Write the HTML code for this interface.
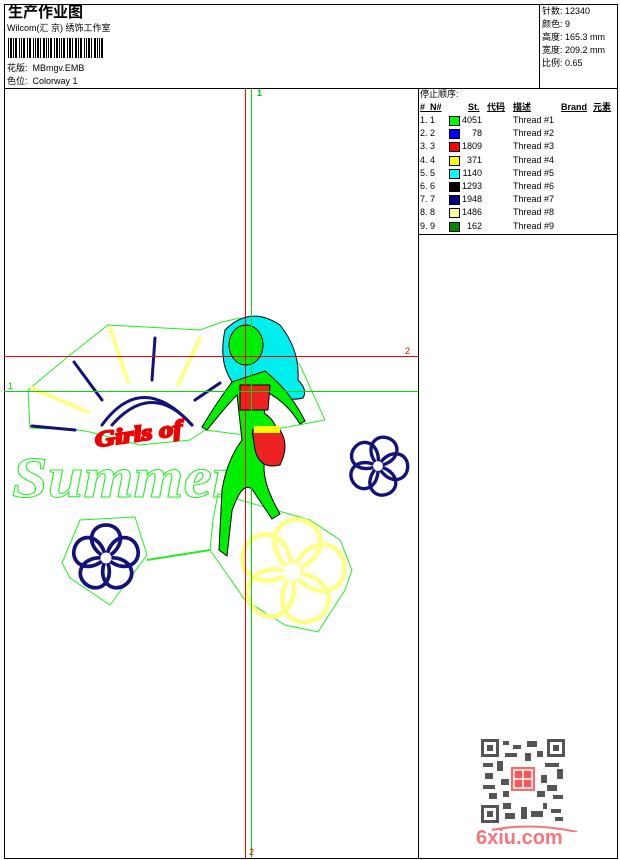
<!DOCTYPE html>
<html><head><meta charset="utf-8"><style>
body{margin:0;width:620px;height:860px;background:#fff;position:relative;overflow:hidden;font-family:"Liberation Sans","Noto Sans CJK SC",sans-serif;color:#000}
.a{position:absolute}
.t{font-size:9px;line-height:11px;white-space:nowrap}
</style></head><body>
<svg class="a" style="left:0;top:0" width="620" height="860">
<defs>
<g id="pet"><path d="M-3,-2 C-14,-10 -10,-22 0,-22 C10,-22 14,-10 3,-2"/></g>
</defs>
<g stroke="#000" stroke-width="1" fill="none" shape-rendering="crispEdges">
<rect x="4.5" y="4.5" width="613" height="854"/>
<line x1="4" y1="88.5" x2="618" y2="88.5"/>
<line x1="539.5" y1="4" x2="539.5" y2="88"/>
<line x1="418.5" y1="88" x2="418.5" y2="858"/>
<line x1="418" y1="234.5" x2="618" y2="234.5"/>
</g>
<g fill="#000" shape-rendering="crispEdges">
<rect x="8" y="38" width="1" height="20"/><rect x="10" y="38" width="2" height="20"/><rect x="13" y="38" width="1" height="20"/><rect x="15" y="38" width="2" height="20"/><rect x="19" y="38" width="1" height="20"/><rect x="21" y="38" width="1" height="20"/><rect x="23" y="38" width="2" height="20"/><rect x="27" y="38" width="1" height="20"/><rect x="29" y="38" width="2" height="20"/><rect x="33" y="38" width="1" height="20"/><rect x="35" y="38" width="1" height="20"/><rect x="37" y="38" width="2" height="20"/><rect x="40" y="38" width="1" height="20"/><rect x="43" y="38" width="2" height="20"/><rect x="46" y="38" width="1" height="20"/><rect x="48" y="38" width="1" height="20"/><rect x="50" y="38" width="2" height="20"/><rect x="54" y="38" width="1" height="20"/><rect x="56" y="38" width="2" height="20"/><rect x="59" y="38" width="1" height="20"/><rect x="61" y="38" width="1" height="20"/><rect x="63" y="38" width="2" height="20"/><rect x="67" y="38" width="1" height="20"/><rect x="69" y="38" width="2" height="20"/><rect x="72" y="38" width="1" height="20"/><rect x="75" y="38" width="2" height="20"/><rect x="78" y="38" width="1" height="20"/><rect x="80" y="38" width="2" height="20"/><rect x="84" y="38" width="1" height="20"/><rect x="86" y="38" width="1" height="20"/><rect x="88" y="38" width="2" height="20"/><rect x="91" y="38" width="1" height="20"/><rect x="94" y="38" width="2" height="20"/><rect x="97" y="38" width="1" height="20"/><rect x="99" y="38" width="1" height="20"/><rect x="101" y="38" width="2" height="20"/>
</g>
<g fill="none" stroke="#2e2" stroke-width="1">
<polygon points="108,325 200,330 222,322 240,318 300,365 325,420 245,435 205,430 190,440 140,445 90,432 78,430 30,428 28,390 70,355"/>
<polygon points="80,520 135,517 147,555 110,605 70,578 62,563"/>
<line x1="147" y1="560" x2="210" y2="550" stroke-width="2"/>
<polygon points="218,494 240,500 275,510 310,520 340,540 352,570 345,590 318,632 285,625 245,600 210,550 213,520"/>
</g>
<text x="12" y="497" font-family="Liberation Serif" font-style="italic" font-weight="bold" font-size="58" fill="none" stroke="#2e2" stroke-width="1" textLength="225" lengthAdjust="spacingAndGlyphs">Summer</text>
<g stroke="#ff8" stroke-width="4" stroke-linecap="round">
<line x1="110" y1="328" x2="128" y2="382"/><line x1="200" y1="338" x2="178" y2="385"/><line x1="32" y1="388" x2="88" y2="412"/>
</g>
<g stroke="#12127a" stroke-width="3" stroke-linecap="round" fill="none">
<line x1="74" y1="362" x2="102" y2="400"/><line x1="155" y1="338" x2="152" y2="380"/><line x1="220" y1="383" x2="195" y2="400"/><line x1="32" y1="426" x2="75" y2="430"/>
<path d="M102,425 q40,-55 90,0"/><path d="M112,425 q40,-45 80,0"/>
</g>
<g stroke="#12127a" stroke-width="2.5" fill="none">
<g transform="translate(106,558) scale(1.5)"><use href="#pet"/><use href="#pet" transform="rotate(72)"/><use href="#pet" transform="rotate(144)"/><use href="#pet" transform="rotate(216)"/><use href="#pet" transform="rotate(288)"/></g>
<g transform="translate(378,466) scale(1.35)"><use href="#pet" transform="rotate(20)"/><use href="#pet" transform="rotate(92)"/><use href="#pet" transform="rotate(164)"/><use href="#pet" transform="rotate(236)"/><use href="#pet" transform="rotate(308)"/></g>
</g>
<g stroke="#ff8" stroke-width="2" fill="none" transform="translate(292,572) scale(2.4)"><use href="#pet" transform="rotate(10)"/><use href="#pet" transform="rotate(82)"/><use href="#pet" transform="rotate(154)"/><use href="#pet" transform="rotate(226)"/><use href="#pet" transform="rotate(298)"/></g>
<text x="96" y="447" font-family="Liberation Serif" font-style="italic" font-weight="bold" font-size="22" fill="#e00" stroke="#e00" stroke-width="2" transform="rotate(-8 96 447)" textLength="88" lengthAdjust="spacingAndGlyphs">Girls of</text>
<path d="M225,330 q25,-25 55,-5 q20,25 18,55 q10,10 5,18 q-20,5 -40,-10 q-20,5 -30,-5 q-15,-20 -8,-53z" fill="#0ee" stroke="#000"/>
<ellipse cx="246" cy="345" rx="17" ry="20" fill="#0e0" stroke="#000"/>
<path d="M232,382 q-15,20 -30,45 l5,3 q20,-25 30,-35 l5,45 q-15,20 -20,50 l-3,60 l8,6 l5,-45 q10,-30 20,-22 l20,30 l8,-5 q-20,-35 -15,-55 l15,-20 q-5,-20 -15,-25 l-5,-25 q25,10 40,35 l5,-3 q-15,-30 -40,-50z" fill="#0e0" stroke="#000"/>
<path d="M240,385 l30,0 l-2,25 l-28,0z" fill="#e22" stroke="#000"/>
<path d="M252,430 l28,0 q10,15 0,35 q-20,5 -25,-15z" fill="#e22" stroke="#000"/>
<rect x="254" y="426" width="26" height="7" fill="#ff0"/>
<g shape-rendering="crispEdges">
<line x1="245.5" y1="89" x2="245.5" y2="858" stroke="#f00"/>
<line x1="251.5" y1="89" x2="251.5" y2="858" stroke="#0d0"/>
<line x1="4" y1="356.5" x2="418" y2="356.5" stroke="#f00"/>
<line x1="4" y1="391.5" x2="418" y2="391.5" stroke="#0d0"/>
</g>
</svg>
<div class="a" style="left:8px;top:4px;font-size:15px;font-weight:bold;line-height:18px">生产作业图</div>
<div class="a t" style="left:7px;top:23px">Wilcom(汇 京) 绣饰工作室</div>
<div class="a t" style="left:7px;top:63px">花版:&nbsp; MBmgv.EMB</div>
<div class="a t" style="left:7px;top:76px">色位:&nbsp; Colorway 1</div>
<div class="a t" style="left:542px;top:6px">针数:&nbsp;12340</div>
<div class="a t" style="left:542px;top:19px">颜色:&nbsp;9</div>
<div class="a t" style="left:542px;top:32px">高度:&nbsp;165.3 mm</div>
<div class="a t" style="left:542px;top:45px">宽度:&nbsp;209.2 mm</div>
<div class="a t" style="left:542px;top:58px">比例:&nbsp;0.65</div>
<div class="a t" style="left:257px;top:88px;color:#0c0;font-weight:bold">1</div>
<div class="a t" style="left:405px;top:346px;color:#e00">2</div>
<div class="a t" style="left:8px;top:381px;color:#0c0">1</div>
<div class="a t" style="left:249px;top:847px;color:#e00">2</div>
<div class="a t" style="left:420px;top:89px">停止顺序:</div>
<div class="a t" style="left:420px;top:102px;font-weight:bold;text-decoration:underline">#&nbsp; N#</div>
<div class="a t" style="left:468px;top:102px;font-weight:bold;text-decoration:underline">St.</div>
<div class="a t" style="left:487px;top:102px;font-weight:bold;text-decoration:underline">代码</div>
<div class="a t" style="left:513px;top:102px;font-weight:bold;text-decoration:underline">描述</div>
<div class="a t" style="left:561px;top:102px;font-weight:bold;text-decoration:underline">Brand</div>
<div class="a t" style="left:593px;top:102px;font-weight:bold;text-decoration:underline">元素</div>
<div class="a" style="left:420px;top:115px">
<div class="t" style="position:relative;height:13.2px">1.&nbsp;1<span class="a" style="left:29px;top:1px;width:9px;height:8px;background:#0f0;border:1px solid #000"></span><span class="a" style="left:42px;width:20px;text-align:right">4051</span><span class="a" style="left:93px">Thread #1</span></div>
<div class="t" style="position:relative;height:13.2px">2.&nbsp;2<span class="a" style="left:29px;top:1px;width:9px;height:8px;background:#00f;border:1px solid #000"></span><span class="a" style="left:42px;width:20px;text-align:right">78</span><span class="a" style="left:93px">Thread #2</span></div>
<div class="t" style="position:relative;height:13.2px">3.&nbsp;3<span class="a" style="left:29px;top:1px;width:9px;height:8px;background:#f00;border:1px solid #000"></span><span class="a" style="left:42px;width:20px;text-align:right">1809</span><span class="a" style="left:93px">Thread #3</span></div>
<div class="t" style="position:relative;height:13.2px">4.&nbsp;4<span class="a" style="left:29px;top:1px;width:9px;height:8px;background:#ff0;border:1px solid #000"></span><span class="a" style="left:42px;width:20px;text-align:right">371</span><span class="a" style="left:93px">Thread #4</span></div>
<div class="t" style="position:relative;height:13.2px">5.&nbsp;5<span class="a" style="left:29px;top:1px;width:9px;height:8px;background:#0ff;border:1px solid #000"></span><span class="a" style="left:42px;width:20px;text-align:right">1140</span><span class="a" style="left:93px">Thread #5</span></div>
<div class="t" style="position:relative;height:13.2px">6.&nbsp;6<span class="a" style="left:29px;top:1px;width:9px;height:8px;background:#000;border:1px solid #000"></span><span class="a" style="left:42px;width:20px;text-align:right">1293</span><span class="a" style="left:93px">Thread #6</span></div>
<div class="t" style="position:relative;height:13.2px">7.&nbsp;7<span class="a" style="left:29px;top:1px;width:9px;height:8px;background:#00007a;border:1px solid #000"></span><span class="a" style="left:42px;width:20px;text-align:right">1948</span><span class="a" style="left:93px">Thread #7</span></div>
<div class="t" style="position:relative;height:13.2px">8.&nbsp;8<span class="a" style="left:29px;top:1px;width:9px;height:8px;background:#ff9;border:1px solid #000"></span><span class="a" style="left:42px;width:20px;text-align:right">1486</span><span class="a" style="left:93px">Thread #8</span></div>
<div class="t" style="position:relative;height:13.2px">9.&nbsp;9<span class="a" style="left:29px;top:1px;width:9px;height:8px;background:#080;border:1px solid #000"></span><span class="a" style="left:42px;width:20px;text-align:right">162</span><span class="a" style="left:93px">Thread #9</span></div>
</div>
<svg class="a" style="left:481px;top:739px" width="84" height="84">
<rect width="84" height="84" fill="#fff"/>
<g fill="#555"><rect x="0" y="0" width="18" height="18"/><rect x="66" y="0" width="18" height="18"/><rect x="0" y="66" width="18" height="18"/></g>
<g fill="#fff"><rect x="3" y="3" width="12" height="12"/><rect x="69" y="3" width="12" height="12"/><rect x="3" y="69" width="12" height="12"/></g>
<g fill="#555"><rect x="6" y="6" width="6" height="6"/><rect x="72" y="6" width="6" height="6"/><rect x="6" y="72" width="6" height="6"/>
<rect x="22" y="2" width="6" height="4"/><rect x="32" y="6" width="8" height="4"/><rect x="46" y="2" width="10" height="6"/><rect x="24" y="14" width="12" height="4"/><rect x="44" y="14" width="6" height="8"/><rect x="56" y="12" width="6" height="6"/>
<rect x="2" y="24" width="10" height="4"/><rect x="16" y="22" width="6" height="10"/><rect x="64" y="24" width="14" height="4"/><rect x="76" y="30" width="6" height="10"/><rect x="4" y="34" width="8" height="6"/><rect x="2" y="46" width="12" height="4"/><rect x="8" y="54" width="8" height="6"/><rect x="66" y="46" width="10" height="6"/><rect x="72" y="56" width="10" height="4"/>
<rect x="22" y="64" width="8" height="6"/><rect x="24" y="74" width="10" height="6"/><rect x="40" y="68" width="6" height="12"/><rect x="50" y="72" width="12" height="6"/><rect x="62" y="64" width="4" height="6"/><rect x="70" y="70" width="10" height="4"/><rect x="74" y="78" width="8" height="4"/>
<rect x="20" y="40" width="8" height="6"/><rect x="60" y="36" width="6" height="8"/><rect x="56" y="52" width="8" height="6"/><rect x="22" y="52" width="6" height="6"/></g>
<rect x="30" y="28" width="24" height="24" fill="#f66"/>
<rect x="32" y="30" width="20" height="20" fill="#fdd"/>
<g fill="#f55"><rect x="34" y="32" width="7" height="7"/><rect x="43" y="32" width="7" height="7"/><rect x="34" y="41" width="7" height="7"/><rect x="43" y="41" width="7" height="7"/></g>
</svg>
<div class="a" style="left:476px;top:826px;font-size:20px;font-weight:bold;color:#f4757b;line-height:24px">6xiu.com</div>
<svg class="a" style="left:490px;top:822px" width="90" height="10"><path d="M2,8 q40,-8 85,2" stroke="#f4757b" stroke-width="2" fill="none"/></svg>
</body></html>
